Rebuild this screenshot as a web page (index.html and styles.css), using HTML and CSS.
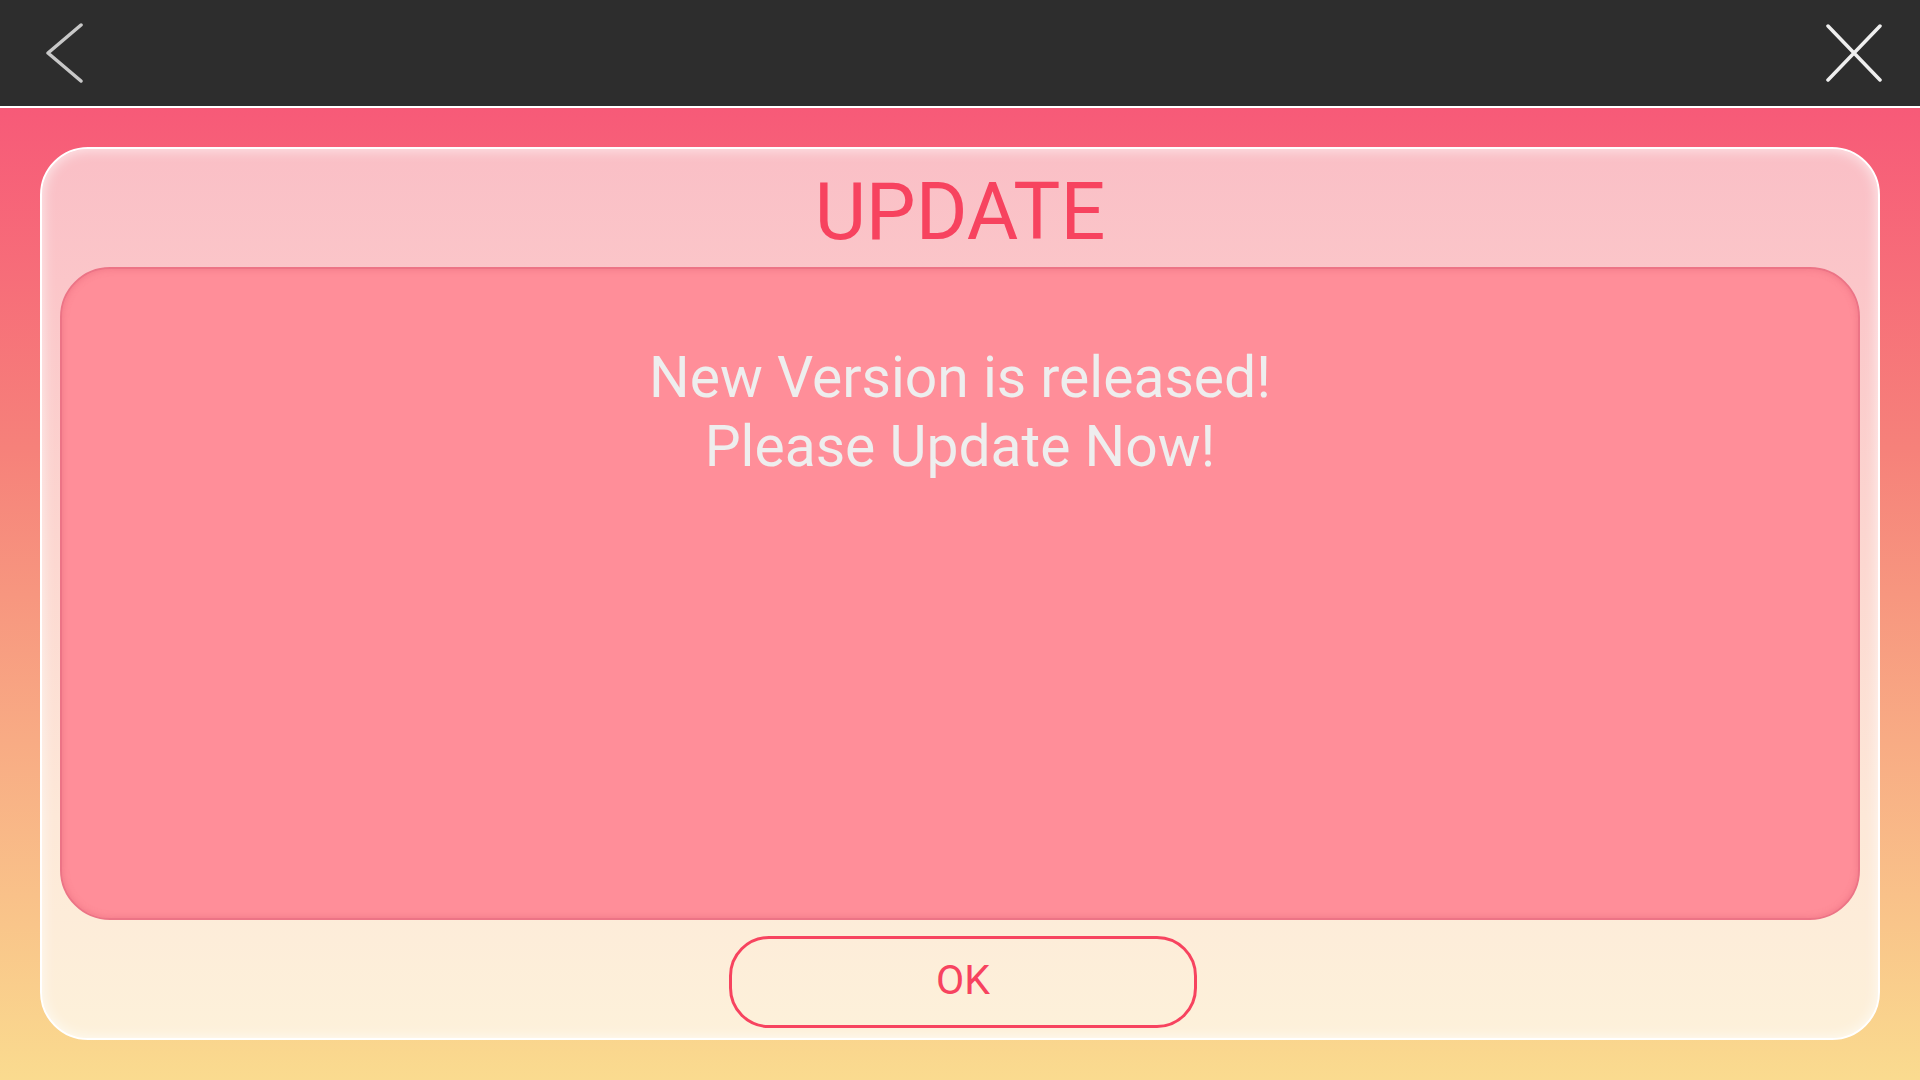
FILE: index.html
```html
<!DOCTYPE html>
<html lang="en">
<head>
<meta charset="utf-8">
<title>Update</title>
<link rel="stylesheet" href="styles.css">
</head>
<body>
<div class="screen">
  <header class="topbar">
    <svg class="icon-back" width="38" height="60" viewBox="0 0 38 60" aria-hidden="true">
      <path d="M35 2 L2 30 L35 58" fill="none" stroke="#c8c8c8" stroke-width="3.5" stroke-linecap="round" stroke-linejoin="round"/>
    </svg>
    <svg class="icon-close" width="56" height="58" viewBox="0 0 56 58" aria-hidden="true">
      <path d="M2 2 L54 56 M54 2 L2 56" fill="none" stroke="#efefef" stroke-width="3.5" stroke-linecap="round"/>
    </svg>
  </header>
  <main class="stage">
    <section class="card">
      <h1 class="title">UPDATE</h1>
      <div class="panel">
        <p class="message">New Version is released!<br>Please Update Now!</p>
      </div>
      <div class="actions">
        <button class="ok-btn" type="button">OK</button>
      </div>
    </section>
  </main>
</div>
</body>
</html>
```
FILE: styles.css
```css
* { box-sizing: border-box; }

html, body {
  margin: 0;
  padding: 0;
  width: 1920px;
  height: 1080px;
  overflow: hidden;
  font-family: Roboto, "Liberation Sans", Arial, sans-serif;
}

.screen {
  display: flex;
  flex-direction: column;
  width: 1920px;
  height: 1080px;
}

.topbar {
  height: 108px;
  flex: none;
  background: #2d2d2d;
  border-bottom: 2px solid #ffffff;
  display: flex;
  align-items: center;
  justify-content: space-between;
  padding: 0 38px 0 46px;
}

.icon-back { display: block; }
.icon-close { display: block; }

.stage {
  flex: 1;
  background: linear-gradient(180deg, #f75a78 0%, #f6817a 35%, #f8ab84 65%, #fadb8f 100%);
  padding: 39px 40px 40px 40px;
  display: flex;
}

.card {
  flex: 1;
  display: flex;
  flex-direction: column;
  border: 2px solid #ffffff;
  border-radius: 48px;
  background: linear-gradient(180deg, #fabfc6 0%, #fbc6c9 15%, #fde8d8 75%, #fdf1da 100%);
  box-shadow: inset 0 0 14px rgba(255, 255, 255, 0.75);
  padding: 13px 18px 10px 18px;
}

.title {
  margin: 0 0 5px 0;
  height: 100px;
  line-height: 100px;
  text-align: center;
  font-size: 79px;
  font-weight: 400;
  color: #f7435f;
}

.panel {
  height: 653px;
  flex: none;
  background: #ff8e99;
  border: 2px solid #ec7486;
  border-radius: 50px;
  box-shadow: inset 0 0 7px rgba(222, 90, 110, 0.45);
  padding-top: 74px;
}

.message {
  margin: 0;
  text-align: center;
  font-size: 57px;
  line-height: 69px;
  color: #eeeeee;
}

.actions {
  display: flex;
  justify-content: center;
  padding-top: 16px;
}

.ok-btn {
  width: 468px;
  height: 92px;
  border: 3px solid #f7435f;
  border-radius: 40px;
  background: transparent;
  color: #f7435f;
  font-family: Roboto, "Liberation Sans", Arial, sans-serif;
  font-size: 41px;
  font-weight: 400;
  padding: 0 0 4px 0;
  margin-left: 6px;
}
```
